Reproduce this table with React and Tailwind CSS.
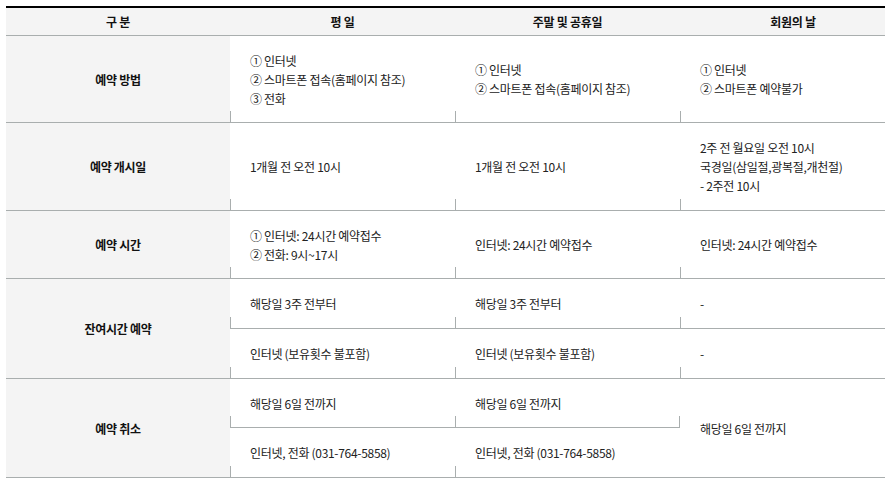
import React from 'react';

const LINE = 'bg-[#a9aeae]';

// small vertical tick drawn at the bottom of a cell edge
const Tick = ({ side = 'left' }) => (
  <span
    className={`absolute bottom-0 w-px h-[11px] ${LINE} ${side === 'left' ? 'left-0' : 'right-0'}`}
  />
);

const Head = ({ children, extra = '' }) => (
  <div className={`flex items-center justify-center bg-[#f4f4f4] border-b border-[#a9aeae] font-bold text-[#111] ${extra}`}>
    {children}
  </div>
);

const Label = ({ children, rows = '' }) => (
  <div className={`flex items-center justify-center bg-[#f4f4f4] border-b border-[#a9aeae] font-bold text-[#111] ${rows}`}>
    {children}
  </div>
);

const Cell = ({ lines, tick = true, rightTick = false, rows = '' }) => (
  <div className={`relative flex flex-col justify-center pl-[20px] border-b border-[#a9aeae] ${rows}`}>
    {lines.map((l, i) => (
      <div key={i}>{l}</div>
    ))}
    {tick && <Tick />}
    {rightTick && <Tick side="right" />}
  </div>
);

export default function App() {
  return (
    <div className="min-h-screen bg-white pt-[6px] pl-[6px]">
      <div
        className="grid w-[879px] grid-cols-[224px_225px_225px_205px] grid-rows-[28px_87px_88px_68px_50px_50px_49px_50px] border-t-2 border-black text-[12px] leading-[19px] text-[#222] tracking-[-0.3px]"
        style={{ fontFamily: '"Noto Sans CJK KR", "Noto Sans", sans-serif' }}
      >
        <Head>구 분</Head>
        <Head>평 일</Head>
        <Head>주말 및 공휴일</Head>
        <Head extra="pl-[21px]">회원의 날</Head>

        <Label>예약 방법</Label>
        <Cell lines={['① 인터넷', '② 스마트폰 접속(홈페이지 참조)', '③ 전화']} />
        <Cell lines={['① 인터넷', '② 스마트폰 접속(홈페이지 참조)']} />
        <Cell lines={['① 인터넷', '② 스마트폰 예약불가']} />

        <Label>예약 개시일</Label>
        <Cell lines={['1개월 전 오전 10시']} />
        <Cell lines={['1개월 전 오전 10시']} />
        <Cell lines={['2주 전 월요일 오전 10시', '국경일(삼일절,광복절,개천절)', '- 2주전 10시']} />

        <Label>예약 시간</Label>
        <Cell lines={['① 인터넷: 24시간 예약접수', '② 전화: 9시~17시']} />
        <Cell lines={['인터넷: 24시간 예약접수']} />
        <Cell lines={['인터넷: 24시간 예약접수']} />

        <Label rows="row-span-2">잔여시간 예약</Label>
        <Cell lines={['해당일 3주 전부터']} />
        <Cell lines={['해당일 3주 전부터']} />
        <Cell lines={['-']} />
        <Cell lines={['인터넷 (보유횟수 불포함)']} />
        <Cell lines={['인터넷 (보유횟수 불포함)']} />
        <Cell lines={['-']} />

        <Label rows="row-span-2">예약 취소</Label>
        <Cell lines={['해당일 6일 전까지']} />
        <Cell lines={['해당일 6일 전까지']} rightTick />
        <Cell lines={['해당일 6일 전까지']} tick={false} rows="row-span-2" />
        <Cell lines={['인터넷, 전화 (031-764-5858)']} />
        <Cell lines={['인터넷, 전화 (031-764-5858)']} />
      </div>
    </div>
  );
}
